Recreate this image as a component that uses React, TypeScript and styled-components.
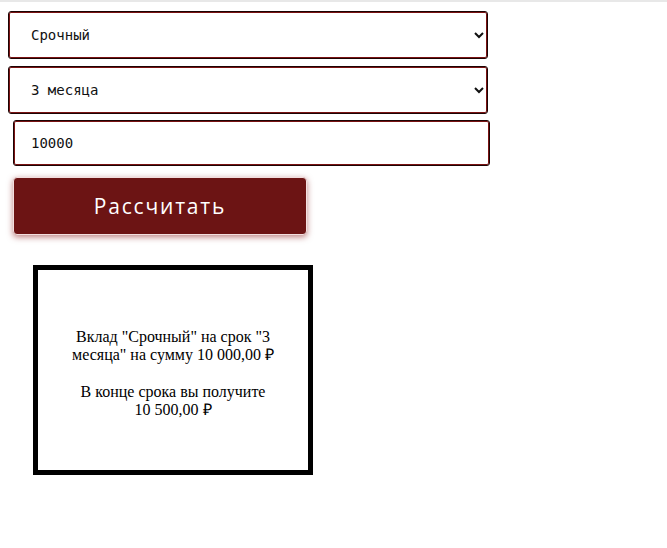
import React, { useState } from "react";
import styled, { createGlobalStyle } from "styled-components";

const Global = createGlobalStyle`
  html, body { margin: 0; padding: 0; background: #ffffff; }
  body { font-family: "Liberation Serif", "Times New Roman", serif; }
`;

const TopRule = styled.div`
  height: 2px;
  background: #e8e8e8;
`;

const Page = styled.div`
  padding: 9px 8px 0 8px;
  display: flex;
  flex-direction: column;
  align-items: flex-start;
`;

const fieldBorder = `
  border: 1px solid #1c0404;
  box-shadow: inset 0 0 0 1px #7a1212;
  border-radius: 3px;
  background: #ffffff;
  color: #111111;
  font-family: "DejaVu Sans Mono", "Liberation Mono", monospace;
  font-size: 14px;
  box-sizing: border-box;
  outline: none;
`;

const Select = styled.select`
  ${fieldBorder}
  width: 480px;
  height: 48px;
  padding: 0 12px 0 18px;
  margin-bottom: 7px;
  &:last-of-type { margin-bottom: 6px; }
`;

const NumberInput = styled.input`
  ${fieldBorder}
  width: 477px;
  height: 46px;
  padding: 0 20px 0 17px;
  margin-left: 5px;
  margin-bottom: 11px;
`;

const CalcButton = styled.button`
  width: 294px;
  height: 58px;
  margin-left: 5px;
  background: #6c1414;
  color: #ffffff;
  border: 1px solid #f2dede;
  border-radius: 4px;
  box-shadow: 0 2px 6px rgba(130, 20, 20, 0.55);
  font-family: "Open Sans", "DejaVu Sans", sans-serif;
  font-size: 21px;
  font-weight: 500;
  letter-spacing: 1.8px;
  padding: 0;
  cursor: pointer;
  box-sizing: border-box;
`;

const ResultBox = styled.div`
  margin: 30px 0 0 25px;
  width: 280px;
  height: 210px;
  box-sizing: border-box;
  border: 5px solid #000000;
  display: flex;
  flex-direction: column;
  justify-content: center;
  align-items: center;
  padding: 6px 32px 0 32px;
  text-align: center;
  font-size: 16px;
  line-height: 18px;
  color: #000000;
`;

const Para = styled.p`
  margin: 0;
  & + & { margin-top: 19px; }
`;

const fmt = (n: number) =>
  n.toFixed(2).replace(".", ",").replace(/\B(?=(\d{3})+(?!\d))/g, "\u00a0") + "\u00a0₽";

export default function App() {
  const [type, setType] = useState("Срочный");
  const [term, setTerm] = useState("3 месяца");
  const [sum, setSum] = useState("10000");
  return (
    <>
      <Global />
      <TopRule />
      <Page>
        <Select value={type} onChange={(e) => setType(e.target.value)}>
          <option>Срочный</option>
          <option>Пополняемый</option>
        </Select>
        <Select value={term} onChange={(e) => setTerm(e.target.value)}>
          <option>3 месяца</option>
          <option>6 месяцев</option>
          <option>9 месяцев</option>
          <option>12 месяцев</option>
        </Select>
        <NumberInput value={sum} onChange={(e) => setSum(e.target.value)} />
        <CalcButton>Рассчитать</CalcButton>
        <ResultBox>
          <Para>Вклад "Срочный" на срок "3 месяца" на сумму {fmt(10000)}</Para>
          <Para>В конце срока вы получите {fmt(10500)}</Para>
        </ResultBox>
      </Page>
    </>
  );
}
